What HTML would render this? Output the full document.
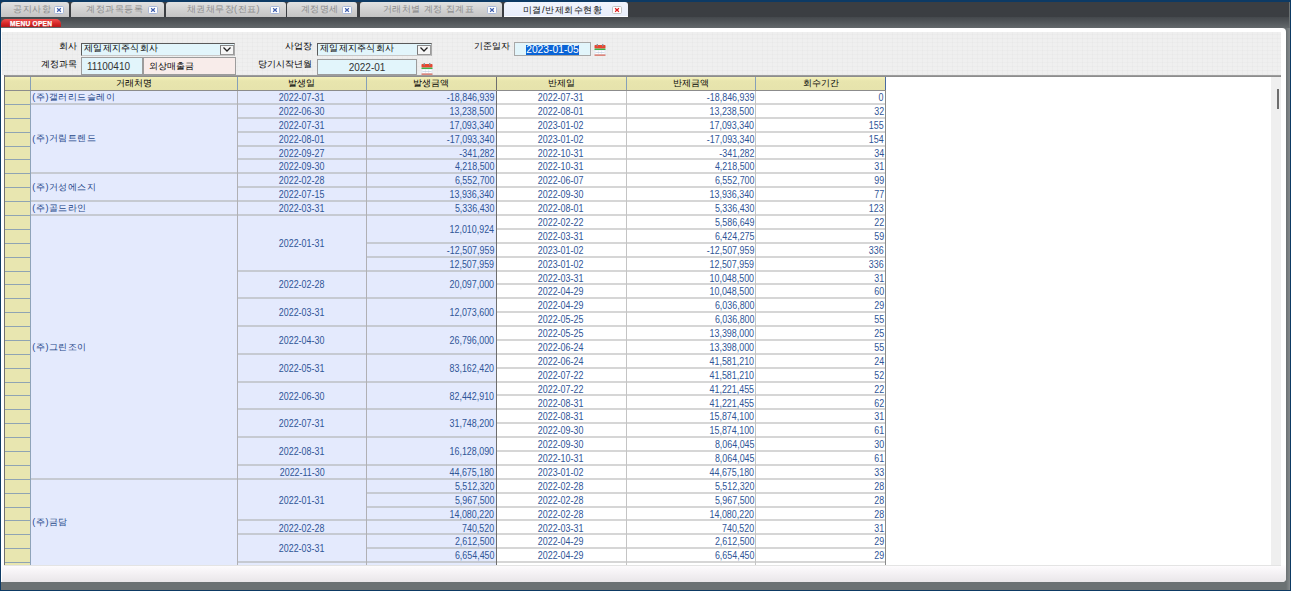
<!DOCTYPE html>
<html><head><meta charset="utf-8">
<style>
html,body{margin:0;padding:0;}
body{width:1291px;height:591px;overflow:hidden;position:relative;background:#6b7173;font-family:"Liberation Sans",sans-serif;}
.a{position:absolute;}
.t{position:absolute;display:flex;align-items:center;white-space:nowrap;color:#2f5597;font-size:10px;box-sizing:border-box;}
.t i{font-style:normal;display:inline-block;transform:scaleX(0.89);}
.c i{transform-origin:50% 50%;} .r i{transform-origin:100% 50%;}
.c,.r{padding-top:1.2px;}
.th{justify-content:center;color:#000;font-size:9px;padding-top:0.6px;}
.nm{color:#27488a;justify-content:flex-start;padding-left:2px;padding-top:0.5px;font-size:9px;letter-spacing:0.45px;}
.c{justify-content:center;}
.r{justify-content:flex-end;padding-right:1.5px;}
.pl,.pr{font-weight:normal;display:inline-block;width:3.8px;text-align:center;}
.hd{background:linear-gradient(#f4f1b9,#e8e5ae 30%,#e6e3ac);}
.tab{position:absolute;top:2px;height:14.5px;border-radius:3px 3px 0 0;background:linear-gradient(#e2e2e2,#cfcfcf 60%,#c4c4c4);}
.tab.act{background:linear-gradient(#f2f5fd,#e8eefb);border-bottom:1px solid #fff;height:14px;}
.tabt{position:absolute;top:2px;height:14px;line-height:14px;font-size:9.2px;letter-spacing:0.5px;color:#8c8c8c;white-space:nowrap;}
.tabt.act{color:#111;font-size:9.3px;letter-spacing:0.55px;top:2.6px;}
.cls{position:absolute;top:5.8px;width:10px;height:8px;}
.cls svg{display:block}
.lbl{position:absolute;font-size:9.2px;color:#000;white-space:nowrap;line-height:12px;}
.inp{position:absolute;box-sizing:border-box;background:#e2f5fb;font-size:9.2px;color:#000;white-space:nowrap;display:flex;align-items:center;}
</style></head><body>
<!-- frame -->
<div class="a" style="left:0;top:0;width:1291px;height:1.5px;background:#0d3a64"></div>
<div class="a" style="left:0;top:0;width:1.2px;height:591px;background:#0d3a64"></div>
<div class="a" style="left:1289.5px;top:0;width:1.5px;height:591px;background:#0d3a64"></div>
<div class="a" style="left:0;top:589.5px;width:1291px;height:1.5px;background:#0d3a64"></div>
<div class="a" style="left:1.2px;top:1.5px;width:1288.3px;height:15px;background:#3b3e42"></div>
<div class="a" style="left:1.2px;top:16.5px;width:1287.5px;height:11px;background:linear-gradient(#44484c,#63686b)"></div>
<div class="a" style="left:1286px;top:27.5px;width:3.5px;height:562px;background:linear-gradient(90deg,#6b7173,#868b8d)"></div>
<div class="tab" style="left:1px;width:67.5px"></div>
<div class="tabt" style="left:13px">공지사항</div>
<div class="cls" style="left:53.5px"><svg width="10" height="8" viewBox="0 0 10 8"><rect x="0.5" y="0.5" width="9" height="7" rx="1.2" fill="#fff" stroke="#a8b8d8"/><path d="M3.1 2.3 L6.9 5.7 M6.9 2.3 L3.1 5.7" stroke="#3f5fae" stroke-width="1.2"/></svg></div>
<div class="tab" style="left:70.5px;width:93.0px"></div>
<div class="tabt" style="left:86px">계정과목등록</div>
<div class="cls" style="left:148px"><svg width="10" height="8" viewBox="0 0 10 8"><rect x="0.5" y="0.5" width="9" height="7" rx="1.2" fill="#fff" stroke="#a8b8d8"/><path d="M3.1 2.3 L6.9 5.7 M6.9 2.3 L3.1 5.7" stroke="#3f5fae" stroke-width="1.2"/></svg></div>
<div class="tab" style="left:165.5px;width:120.0px"></div>
<div class="tabt" style="left:186.5px">채권채무장(전표)</div>
<div class="cls" style="left:269.5px"><svg width="10" height="8" viewBox="0 0 10 8"><rect x="0.5" y="0.5" width="9" height="7" rx="1.2" fill="#fff" stroke="#a8b8d8"/><path d="M3.1 2.3 L6.9 5.7 M6.9 2.3 L3.1 5.7" stroke="#3f5fae" stroke-width="1.2"/></svg></div>
<div class="tab" style="left:287px;width:69.5px"></div>
<div class="tabt" style="left:300.5px">계정명세</div>
<div class="cls" style="left:342px"><svg width="10" height="8" viewBox="0 0 10 8"><rect x="0.5" y="0.5" width="9" height="7" rx="1.2" fill="#fff" stroke="#a8b8d8"/><path d="M3.1 2.3 L6.9 5.7 M6.9 2.3 L3.1 5.7" stroke="#3f5fae" stroke-width="1.2"/></svg></div>
<div class="tab" style="left:359.5px;width:142.0px"></div>
<div class="tabt" style="left:382.5px">거래처별 계정 집계표</div>
<div class="cls" style="left:487px"><svg width="10" height="8" viewBox="0 0 10 8"><rect x="0.5" y="0.5" width="9" height="7" rx="1.2" fill="#fff" stroke="#a8b8d8"/><path d="M3.1 2.3 L6.9 5.7 M6.9 2.3 L3.1 5.7" stroke="#3f5fae" stroke-width="1.2"/></svg></div>
<div class="tab act" style="left:504px;width:124px"></div>
<div class="tabt act" style="left:522.8px">미결/반제회수현황</div>
<div class="cls" style="left:612px"><svg width="10" height="8" viewBox="0 0 10 8"><rect x="0.5" y="0.5" width="9" height="7" rx="1.2" fill="#fff" stroke="#c4c4c4"/><path d="M3.1 2.3 L6.9 5.7 M6.9 2.3 L3.1 5.7" stroke="#e01818" stroke-width="1.2"/></svg></div>
<!-- menu open -->
<div class="a" style="left:1.2px;top:19.3px;width:60px;height:8.2px;border-radius:5px 5px 0 0;background:linear-gradient(#f05050,#d42626 60%,#b81818)"></div>
<div class="a" style="left:10px;top:19.5px;height:8px;line-height:8px;font-size:6.6px;font-weight:bold;color:#fff;letter-spacing:0.25px;-webkit-text-stroke:0.25px #fff;white-space:nowrap">MENU OPEN</div>
<!-- panel -->
<div class="a" style="left:1.2px;top:27.5px;width:1284.8px;height:554.6px;background:#fff;border-radius:0 4px 4px 0"></div>
<div class="a" style="left:2px;top:31.5px;width:1279px;height:43px;background:repeating-linear-gradient(90deg,rgba(0,0,0,0.015) 0 1px,transparent 1px 5px),repeating-linear-gradient(0deg,rgba(0,0,0,0.015) 0 1px,transparent 1px 4px),#efefef"></div>
<div class="a" style="left:2px;top:565.2px;width:1284px;height:16.9px;background:linear-gradient(#fefdfe,#f6f3f6 40%,#e9e6e9);border-radius:0 0 4px 0"></div>
<!-- form -->
<div class="lbl" style="right:1214.3px;top:39.7px">회사</div>
<div class="inp" style="left:81px;top:43px;width:154px;height:12.5px;border-top:1.5px solid #5a5a5a;border-left:1.5px solid #5a5a5a;border-right:1px solid #a8a8a8;border-bottom:1px solid #c8c8c8;padding-left:2px;letter-spacing:0.3px;padding-bottom:1px">제일제지주식회사</div>
<div class="a" style="left:220px;top:44.5px;width:14px;height:10px;background:#f6f6f6;border:1px solid #9a9a9a;border-left-color:#7a7a7a;border-top-color:#8a8a8a;box-sizing:border-box"></div>
<svg class="a" style="left:222px;top:46px" width="10" height="7" viewBox="0 0 10 7"><path d="M1.5 1.5 L5 5 L8.5 1.5" fill="none" stroke="#222" stroke-width="1.3"/></svg>
<div class="lbl" style="right:1214.3px;top:58px">계정과목</div>
<div class="inp" style="left:81px;top:57px;width:62px;height:18px;border:1px solid #9c9c9c;padding-left:5px;font-size:10px;padding-top:1px;color:#333">11100410</div>
<div class="inp" style="left:143px;top:57px;width:93px;height:18px;border:1px solid #9c9c9c;background:#f8ecea;padding-left:5px">외상매출금</div>
<div class="lbl" style="right:979.1px;top:39.7px">사업장</div>
<div class="inp" style="left:317px;top:43px;width:115px;height:12.5px;border-top:1.5px solid #5a5a5a;border-left:1.5px solid #5a5a5a;border-right:1px solid #a8a8a8;border-bottom:1px solid #c8c8c8;padding-left:2px;letter-spacing:0.3px;padding-bottom:1px">제일제지주식회사</div>
<div class="a" style="left:417px;top:44.5px;width:14px;height:10px;background:#f6f6f6;border:1px solid #9a9a9a;border-left-color:#7a7a7a;border-top-color:#8a8a8a;box-sizing:border-box"></div>
<svg class="a" style="left:419px;top:46px" width="10" height="7" viewBox="0 0 10 7"><path d="M1.5 1.5 L5 5 L8.5 1.5" fill="none" stroke="#222" stroke-width="1.3"/></svg>
<div class="lbl" style="right:979.1px;top:58.2px">당기시작년월</div>
<div class="inp" style="left:317px;top:59px;width:100px;height:16px;border:1px solid #9c9c9c;justify-content:center;font-size:10px;color:#333">2022-01</div>
<div class="a" style="left:420.5px;top:62.5px"><svg style="display:block" width="12" height="12" viewBox="0 0 12 12"><rect x="0.5" y="1" width="11" height="10.5" fill="#e4ecf6"/><rect x="0.5" y="1" width="11" height="3.6" rx="0.8" fill="#e8452e"/><rect x="0.5" y="4.6" width="11" height="1.4" fill="#3fb24a"/><g fill="#fff"><rect x="1.5" y="6.6" width="2.4" height="3.4"/><rect x="4.8" y="6.6" width="2.4" height="3.4"/><rect x="8.1" y="6.6" width="2.4" height="3.4"/></g><g fill="#b8c8dc"><rect x="1.5" y="8.1" width="9" height="0.6"/></g><rect x="0.5" y="10.6" width="11" height="1" fill="#d4452e"/><rect x="2.6" y="0" width="1.3" height="2.4" fill="#8a8f94"/><rect x="8.1" y="0" width="1.3" height="2.4" fill="#8a8f94"/></svg></div>
<div class="lbl" style="right:781.4px;top:39.7px">기준일자</div>
<div class="inp" style="left:514px;top:42px;width:77px;height:13.5px;border:1px solid #a8a8a8;justify-content:center"><span style="background:#0a64d6;color:#fff;padding:0 0.5px;line-height:10px;font-size:10.3px;margin-top:1.5px">2023-01-05</span></div>
<div class="a" style="left:594px;top:43.5px"><svg style="display:block" width="12" height="12" viewBox="0 0 12 12"><rect x="0.5" y="1" width="11" height="10.5" fill="#e4ecf6"/><rect x="0.5" y="1" width="11" height="3.6" rx="0.8" fill="#e8452e"/><rect x="0.5" y="4.6" width="11" height="1.4" fill="#3fb24a"/><g fill="#fff"><rect x="1.5" y="6.6" width="2.4" height="3.4"/><rect x="4.8" y="6.6" width="2.4" height="3.4"/><rect x="8.1" y="6.6" width="2.4" height="3.4"/></g><g fill="#b8c8dc"><rect x="1.5" y="8.1" width="9" height="0.6"/></g><rect x="0.5" y="10.6" width="11" height="1" fill="#d4452e"/><rect x="2.6" y="0" width="1.3" height="2.4" fill="#8a8f94"/><rect x="8.1" y="0" width="1.3" height="2.4" fill="#8a8f94"/></svg></div>
<!-- table -->
<div class="a" style="left:4.00px;top:90.00px;width:26.00px;height:475.20px;background:#e8e6b0"></div>
<div class="a" style="left:30.00px;top:90.00px;width:466.00px;height:475.20px;background:#e4eafd"></div>
<div class="a hd" style="left:4.00px;top:77.00px;width:881.50px;height:13.00px;"></div>
<div class="a" style="left:4.00px;top:104.00px;width:26.00px;height:1.00px;background:#8fa4b3"></div>
<div class="a" style="left:30.00px;top:103.00px;width:207.00px;height:2.00px;background:#c6cad2"></div>
<div class="a" style="left:237.00px;top:103.00px;width:129.50px;height:2.00px;background:#c6cad2"></div>
<div class="a" style="left:366.50px;top:103.00px;width:129.50px;height:2.00px;background:#c6cad2"></div>
<div class="a" style="left:496.00px;top:103.00px;width:389.50px;height:2.00px;background:#d6d6d6"></div>
<div class="a" style="left:4.00px;top:118.00px;width:26.00px;height:1.00px;background:#8fa4b3"></div>
<div class="a" style="left:237.00px;top:117.00px;width:129.50px;height:2.00px;background:#c6cad2"></div>
<div class="a" style="left:366.50px;top:117.00px;width:129.50px;height:2.00px;background:#c6cad2"></div>
<div class="a" style="left:496.00px;top:117.00px;width:389.50px;height:2.00px;background:#d6d6d6"></div>
<div class="a" style="left:4.00px;top:132.00px;width:26.00px;height:1.00px;background:#8fa4b3"></div>
<div class="a" style="left:237.00px;top:131.00px;width:129.50px;height:2.00px;background:#c6cad2"></div>
<div class="a" style="left:366.50px;top:131.00px;width:129.50px;height:2.00px;background:#c6cad2"></div>
<div class="a" style="left:496.00px;top:131.00px;width:389.50px;height:2.00px;background:#d6d6d6"></div>
<div class="a" style="left:4.00px;top:146.00px;width:26.00px;height:1.00px;background:#8fa4b3"></div>
<div class="a" style="left:237.00px;top:145.00px;width:129.50px;height:2.00px;background:#c6cad2"></div>
<div class="a" style="left:366.50px;top:145.00px;width:129.50px;height:2.00px;background:#c6cad2"></div>
<div class="a" style="left:496.00px;top:145.00px;width:389.50px;height:2.00px;background:#d6d6d6"></div>
<div class="a" style="left:4.00px;top:159.00px;width:26.00px;height:1.00px;background:#8fa4b3"></div>
<div class="a" style="left:237.00px;top:158.00px;width:129.50px;height:2.00px;background:#c6cad2"></div>
<div class="a" style="left:366.50px;top:158.00px;width:129.50px;height:2.00px;background:#c6cad2"></div>
<div class="a" style="left:496.00px;top:158.00px;width:389.50px;height:2.00px;background:#d6d6d6"></div>
<div class="a" style="left:4.00px;top:173.00px;width:26.00px;height:1.00px;background:#8fa4b3"></div>
<div class="a" style="left:30.00px;top:172.00px;width:207.00px;height:2.00px;background:#c6cad2"></div>
<div class="a" style="left:237.00px;top:172.00px;width:129.50px;height:2.00px;background:#c6cad2"></div>
<div class="a" style="left:366.50px;top:172.00px;width:129.50px;height:2.00px;background:#c6cad2"></div>
<div class="a" style="left:496.00px;top:172.00px;width:389.50px;height:2.00px;background:#d6d6d6"></div>
<div class="a" style="left:4.00px;top:187.00px;width:26.00px;height:1.00px;background:#8fa4b3"></div>
<div class="a" style="left:237.00px;top:186.00px;width:129.50px;height:2.00px;background:#c6cad2"></div>
<div class="a" style="left:366.50px;top:186.00px;width:129.50px;height:2.00px;background:#c6cad2"></div>
<div class="a" style="left:496.00px;top:186.00px;width:389.50px;height:2.00px;background:#d6d6d6"></div>
<div class="a" style="left:4.00px;top:201.00px;width:26.00px;height:1.00px;background:#8fa4b3"></div>
<div class="a" style="left:30.00px;top:200.00px;width:207.00px;height:2.00px;background:#c6cad2"></div>
<div class="a" style="left:237.00px;top:200.00px;width:129.50px;height:2.00px;background:#c6cad2"></div>
<div class="a" style="left:366.50px;top:200.00px;width:129.50px;height:2.00px;background:#c6cad2"></div>
<div class="a" style="left:496.00px;top:200.00px;width:389.50px;height:2.00px;background:#d6d6d6"></div>
<div class="a" style="left:4.00px;top:215.00px;width:26.00px;height:1.00px;background:#8fa4b3"></div>
<div class="a" style="left:30.00px;top:214.00px;width:207.00px;height:2.00px;background:#c6cad2"></div>
<div class="a" style="left:237.00px;top:214.00px;width:129.50px;height:2.00px;background:#c6cad2"></div>
<div class="a" style="left:366.50px;top:214.00px;width:129.50px;height:2.00px;background:#c6cad2"></div>
<div class="a" style="left:496.00px;top:214.00px;width:389.50px;height:2.00px;background:#d6d6d6"></div>
<div class="a" style="left:4.00px;top:229.00px;width:26.00px;height:1.00px;background:#8fa4b3"></div>
<div class="a" style="left:496.00px;top:228.00px;width:389.50px;height:2.00px;background:#d6d6d6"></div>
<div class="a" style="left:4.00px;top:243.00px;width:26.00px;height:1.00px;background:#8fa4b3"></div>
<div class="a" style="left:366.50px;top:242.00px;width:129.50px;height:2.00px;background:#c6cad2"></div>
<div class="a" style="left:496.00px;top:242.00px;width:389.50px;height:2.00px;background:#d6d6d6"></div>
<div class="a" style="left:4.00px;top:257.00px;width:26.00px;height:1.00px;background:#8fa4b3"></div>
<div class="a" style="left:366.50px;top:256.00px;width:129.50px;height:2.00px;background:#c6cad2"></div>
<div class="a" style="left:496.00px;top:256.00px;width:389.50px;height:2.00px;background:#d6d6d6"></div>
<div class="a" style="left:4.00px;top:271.00px;width:26.00px;height:1.00px;background:#8fa4b3"></div>
<div class="a" style="left:237.00px;top:270.00px;width:129.50px;height:2.00px;background:#c6cad2"></div>
<div class="a" style="left:366.50px;top:270.00px;width:129.50px;height:2.00px;background:#c6cad2"></div>
<div class="a" style="left:496.00px;top:270.00px;width:389.50px;height:2.00px;background:#d6d6d6"></div>
<div class="a" style="left:4.00px;top:284.00px;width:26.00px;height:1.00px;background:#8fa4b3"></div>
<div class="a" style="left:496.00px;top:283.00px;width:389.50px;height:2.00px;background:#d6d6d6"></div>
<div class="a" style="left:4.00px;top:298.00px;width:26.00px;height:1.00px;background:#8fa4b3"></div>
<div class="a" style="left:237.00px;top:297.00px;width:129.50px;height:2.00px;background:#c6cad2"></div>
<div class="a" style="left:366.50px;top:297.00px;width:129.50px;height:2.00px;background:#c6cad2"></div>
<div class="a" style="left:496.00px;top:297.00px;width:389.50px;height:2.00px;background:#d6d6d6"></div>
<div class="a" style="left:4.00px;top:312.00px;width:26.00px;height:1.00px;background:#8fa4b3"></div>
<div class="a" style="left:496.00px;top:311.00px;width:389.50px;height:2.00px;background:#d6d6d6"></div>
<div class="a" style="left:4.00px;top:326.00px;width:26.00px;height:1.00px;background:#8fa4b3"></div>
<div class="a" style="left:237.00px;top:325.00px;width:129.50px;height:2.00px;background:#c6cad2"></div>
<div class="a" style="left:366.50px;top:325.00px;width:129.50px;height:2.00px;background:#c6cad2"></div>
<div class="a" style="left:496.00px;top:325.00px;width:389.50px;height:2.00px;background:#d6d6d6"></div>
<div class="a" style="left:4.00px;top:340.00px;width:26.00px;height:1.00px;background:#8fa4b3"></div>
<div class="a" style="left:496.00px;top:339.00px;width:389.50px;height:2.00px;background:#d6d6d6"></div>
<div class="a" style="left:4.00px;top:354.00px;width:26.00px;height:1.00px;background:#8fa4b3"></div>
<div class="a" style="left:237.00px;top:353.00px;width:129.50px;height:2.00px;background:#c6cad2"></div>
<div class="a" style="left:366.50px;top:353.00px;width:129.50px;height:2.00px;background:#c6cad2"></div>
<div class="a" style="left:496.00px;top:353.00px;width:389.50px;height:2.00px;background:#d6d6d6"></div>
<div class="a" style="left:4.00px;top:368.00px;width:26.00px;height:1.00px;background:#8fa4b3"></div>
<div class="a" style="left:496.00px;top:367.00px;width:389.50px;height:2.00px;background:#d6d6d6"></div>
<div class="a" style="left:4.00px;top:382.00px;width:26.00px;height:1.00px;background:#8fa4b3"></div>
<div class="a" style="left:237.00px;top:381.00px;width:129.50px;height:2.00px;background:#c6cad2"></div>
<div class="a" style="left:366.50px;top:381.00px;width:129.50px;height:2.00px;background:#c6cad2"></div>
<div class="a" style="left:496.00px;top:381.00px;width:389.50px;height:2.00px;background:#d6d6d6"></div>
<div class="a" style="left:4.00px;top:395.00px;width:26.00px;height:1.00px;background:#8fa4b3"></div>
<div class="a" style="left:496.00px;top:394.00px;width:389.50px;height:2.00px;background:#d6d6d6"></div>
<div class="a" style="left:4.00px;top:409.00px;width:26.00px;height:1.00px;background:#8fa4b3"></div>
<div class="a" style="left:237.00px;top:408.00px;width:129.50px;height:2.00px;background:#c6cad2"></div>
<div class="a" style="left:366.50px;top:408.00px;width:129.50px;height:2.00px;background:#c6cad2"></div>
<div class="a" style="left:496.00px;top:408.00px;width:389.50px;height:2.00px;background:#d6d6d6"></div>
<div class="a" style="left:4.00px;top:423.00px;width:26.00px;height:1.00px;background:#8fa4b3"></div>
<div class="a" style="left:496.00px;top:422.00px;width:389.50px;height:2.00px;background:#d6d6d6"></div>
<div class="a" style="left:4.00px;top:437.00px;width:26.00px;height:1.00px;background:#8fa4b3"></div>
<div class="a" style="left:237.00px;top:436.00px;width:129.50px;height:2.00px;background:#c6cad2"></div>
<div class="a" style="left:366.50px;top:436.00px;width:129.50px;height:2.00px;background:#c6cad2"></div>
<div class="a" style="left:496.00px;top:436.00px;width:389.50px;height:2.00px;background:#d6d6d6"></div>
<div class="a" style="left:4.00px;top:451.00px;width:26.00px;height:1.00px;background:#8fa4b3"></div>
<div class="a" style="left:496.00px;top:450.00px;width:389.50px;height:2.00px;background:#d6d6d6"></div>
<div class="a" style="left:4.00px;top:465.00px;width:26.00px;height:1.00px;background:#8fa4b3"></div>
<div class="a" style="left:237.00px;top:464.00px;width:129.50px;height:2.00px;background:#c6cad2"></div>
<div class="a" style="left:366.50px;top:464.00px;width:129.50px;height:2.00px;background:#c6cad2"></div>
<div class="a" style="left:496.00px;top:464.00px;width:389.50px;height:2.00px;background:#d6d6d6"></div>
<div class="a" style="left:4.00px;top:479.00px;width:26.00px;height:1.00px;background:#8fa4b3"></div>
<div class="a" style="left:30.00px;top:478.00px;width:207.00px;height:2.00px;background:#c6cad2"></div>
<div class="a" style="left:237.00px;top:478.00px;width:129.50px;height:2.00px;background:#c6cad2"></div>
<div class="a" style="left:366.50px;top:478.00px;width:129.50px;height:2.00px;background:#c6cad2"></div>
<div class="a" style="left:496.00px;top:478.00px;width:389.50px;height:2.00px;background:#d6d6d6"></div>
<div class="a" style="left:4.00px;top:493.00px;width:26.00px;height:1.00px;background:#8fa4b3"></div>
<div class="a" style="left:366.50px;top:492.00px;width:129.50px;height:2.00px;background:#c6cad2"></div>
<div class="a" style="left:496.00px;top:492.00px;width:389.50px;height:2.00px;background:#d6d6d6"></div>
<div class="a" style="left:4.00px;top:507.00px;width:26.00px;height:1.00px;background:#8fa4b3"></div>
<div class="a" style="left:366.50px;top:506.00px;width:129.50px;height:2.00px;background:#c6cad2"></div>
<div class="a" style="left:496.00px;top:506.00px;width:389.50px;height:2.00px;background:#d6d6d6"></div>
<div class="a" style="left:4.00px;top:520.00px;width:26.00px;height:1.00px;background:#8fa4b3"></div>
<div class="a" style="left:237.00px;top:519.00px;width:129.50px;height:2.00px;background:#c6cad2"></div>
<div class="a" style="left:366.50px;top:519.00px;width:129.50px;height:2.00px;background:#c6cad2"></div>
<div class="a" style="left:496.00px;top:519.00px;width:389.50px;height:2.00px;background:#d6d6d6"></div>
<div class="a" style="left:4.00px;top:534.00px;width:26.00px;height:1.00px;background:#8fa4b3"></div>
<div class="a" style="left:237.00px;top:533.00px;width:129.50px;height:2.00px;background:#c6cad2"></div>
<div class="a" style="left:366.50px;top:533.00px;width:129.50px;height:2.00px;background:#c6cad2"></div>
<div class="a" style="left:496.00px;top:533.00px;width:389.50px;height:2.00px;background:#d6d6d6"></div>
<div class="a" style="left:4.00px;top:548.00px;width:26.00px;height:1.00px;background:#8fa4b3"></div>
<div class="a" style="left:366.50px;top:547.00px;width:129.50px;height:2.00px;background:#c6cad2"></div>
<div class="a" style="left:496.00px;top:547.00px;width:389.50px;height:2.00px;background:#d6d6d6"></div>
<div class="a" style="left:4.00px;top:562.00px;width:26.00px;height:1.00px;background:#8fa4b3"></div>
<div class="a" style="left:237.00px;top:561.00px;width:129.50px;height:2.00px;background:#c6cad2"></div>
<div class="a" style="left:366.50px;top:561.00px;width:129.50px;height:2.00px;background:#c6cad2"></div>
<div class="a" style="left:496.00px;top:561.00px;width:389.50px;height:2.00px;background:#d6d6d6"></div>
<div class="a" style="left:29.50px;top:90.00px;width:1.00px;height:475.20px;background:#8ea3b9"></div>
<div class="a" style="left:236.50px;top:90.00px;width:1.00px;height:475.20px;background:#b0b0b4"></div>
<div class="a" style="left:366.00px;top:90.00px;width:1.00px;height:475.20px;background:#b0b0b4"></div>
<div class="a" style="left:495.50px;top:77.00px;width:1.00px;height:488.20px;background:#6e6e6e"></div>
<div class="a" style="left:625.50px;top:90.00px;width:1.00px;height:475.20px;background:#c4c4c4"></div>
<div class="a" style="left:755.00px;top:90.00px;width:1.00px;height:475.20px;background:#c4c4c4"></div>
<div class="a" style="left:885.00px;top:90.00px;width:1.00px;height:475.20px;background:#8a8a8a"></div>
<div class="a" style="left:29.50px;top:77.00px;width:1.00px;height:13.00px;background:#86a0b8"></div>
<div class="a" style="left:236.50px;top:77.00px;width:1.00px;height:13.00px;background:#86a0b8"></div>
<div class="a" style="left:366.00px;top:77.00px;width:1.00px;height:13.00px;background:#86a0b8"></div>
<div class="a" style="left:625.50px;top:77.00px;width:1.00px;height:13.00px;background:#86a0b8"></div>
<div class="a" style="left:755.00px;top:77.00px;width:1.00px;height:13.00px;background:#86a0b8"></div>
<div class="a" style="left:885.00px;top:77.00px;width:1.00px;height:13.00px;background:#4a6aa0"></div>
<div class="a" style="left:3.50px;top:75.00px;width:1277.00px;height:2.00px;background:linear-gradient(#a4a4a4,#858585)"></div>
<div class="a" style="left:4.00px;top:89.50px;width:881.50px;height:1.00px;background:#8c8c8c"></div>
<div class="a" style="left:3.50px;top:75.00px;width:1.00px;height:490.20px;background:#707070"></div>
<div class="t th" style="left:30.00px;top:76.00px;width:207.00px;height:14.00px;">거래처명</div>
<div class="t th" style="left:237.00px;top:76.00px;width:129.50px;height:14.00px;">발생일</div>
<div class="t th" style="left:366.50px;top:76.00px;width:129.50px;height:14.00px;">발생금액</div>
<div class="t th" style="left:496.00px;top:76.00px;width:130.00px;height:14.00px;">반제일</div>
<div class="t th" style="left:626.00px;top:76.00px;width:129.50px;height:14.00px;">반제금액</div>
<div class="t th" style="left:755.50px;top:76.00px;width:130.00px;height:14.00px;">회수기간</div>
<div class="t nm" style="left:30.00px;top:90.00px;width:207.00px;height:13.89px;"><b class="pl">(</b>주<b class="pr">)</b>갤러리드슬레이</div>
<div class="t nm" style="left:30.00px;top:103.89px;width:207.00px;height:69.43px;"><b class="pl">(</b>주<b class="pr">)</b>거림트렌드</div>
<div class="t nm" style="left:30.00px;top:173.32px;width:207.00px;height:27.77px;"><b class="pl">(</b>주<b class="pr">)</b>거성에스지</div>
<div class="t nm" style="left:30.00px;top:201.09px;width:207.00px;height:13.89px;"><b class="pl">(</b>주<b class="pr">)</b>골드라인</div>
<div class="t nm" style="left:30.00px;top:214.97px;width:207.00px;height:263.83px;"><b class="pl">(</b>주<b class="pr">)</b>그린조이</div>
<div class="t nm" style="left:30.00px;top:478.81px;width:207.00px;height:86.39px;"><b class="pl">(</b>주<b class="pr">)</b>금담</div>
<div class="t c" style="left:237.00px;top:90.00px;width:129.50px;height:13.89px;"><i>2022-07-31</i></div>
<div class="t c" style="left:237.00px;top:103.89px;width:129.50px;height:13.89px;"><i>2022-06-30</i></div>
<div class="t c" style="left:237.00px;top:117.77px;width:129.50px;height:13.89px;"><i>2022-07-31</i></div>
<div class="t c" style="left:237.00px;top:131.66px;width:129.50px;height:13.89px;"><i>2022-08-01</i></div>
<div class="t c" style="left:237.00px;top:145.54px;width:129.50px;height:13.89px;"><i>2022-09-27</i></div>
<div class="t c" style="left:237.00px;top:159.43px;width:129.50px;height:13.89px;"><i>2022-09-30</i></div>
<div class="t c" style="left:237.00px;top:173.32px;width:129.50px;height:13.89px;"><i>2022-02-28</i></div>
<div class="t c" style="left:237.00px;top:187.20px;width:129.50px;height:13.89px;"><i>2022-07-15</i></div>
<div class="t c" style="left:237.00px;top:201.09px;width:129.50px;height:13.89px;"><i>2022-03-31</i></div>
<div class="t c" style="left:237.00px;top:214.97px;width:129.50px;height:55.54px;"><i>2022-01-31</i></div>
<div class="t c" style="left:237.00px;top:270.52px;width:129.50px;height:27.77px;"><i>2022-02-28</i></div>
<div class="t c" style="left:237.00px;top:298.29px;width:129.50px;height:27.77px;"><i>2022-03-31</i></div>
<div class="t c" style="left:237.00px;top:326.06px;width:129.50px;height:27.77px;"><i>2022-04-30</i></div>
<div class="t c" style="left:237.00px;top:353.83px;width:129.50px;height:27.77px;"><i>2022-05-31</i></div>
<div class="t c" style="left:237.00px;top:381.61px;width:129.50px;height:27.77px;"><i>2022-06-30</i></div>
<div class="t c" style="left:237.00px;top:409.38px;width:129.50px;height:27.77px;"><i>2022-07-31</i></div>
<div class="t c" style="left:237.00px;top:437.15px;width:129.50px;height:27.77px;"><i>2022-08-31</i></div>
<div class="t c" style="left:237.00px;top:464.92px;width:129.50px;height:13.89px;"><i>2022-11-30</i></div>
<div class="t c" style="left:237.00px;top:478.81px;width:129.50px;height:41.66px;"><i>2022-01-31</i></div>
<div class="t c" style="left:237.00px;top:520.47px;width:129.50px;height:13.89px;"><i>2022-02-28</i></div>
<div class="t c" style="left:237.00px;top:534.35px;width:129.50px;height:27.77px;"><i>2022-03-31</i></div>
<div class="t r" style="left:366.50px;top:90.00px;width:129.50px;height:13.89px;"><i>-18,846,939</i></div>
<div class="t r" style="left:366.50px;top:103.89px;width:129.50px;height:13.89px;"><i>13,238,500</i></div>
<div class="t r" style="left:366.50px;top:117.77px;width:129.50px;height:13.89px;"><i>17,093,340</i></div>
<div class="t r" style="left:366.50px;top:131.66px;width:129.50px;height:13.89px;"><i>-17,093,340</i></div>
<div class="t r" style="left:366.50px;top:145.54px;width:129.50px;height:13.89px;"><i>-341,282</i></div>
<div class="t r" style="left:366.50px;top:159.43px;width:129.50px;height:13.89px;"><i>4,218,500</i></div>
<div class="t r" style="left:366.50px;top:173.32px;width:129.50px;height:13.89px;"><i>6,552,700</i></div>
<div class="t r" style="left:366.50px;top:187.20px;width:129.50px;height:13.89px;"><i>13,936,340</i></div>
<div class="t r" style="left:366.50px;top:201.09px;width:129.50px;height:13.89px;"><i>5,336,430</i></div>
<div class="t r" style="left:366.50px;top:214.97px;width:129.50px;height:27.77px;"><i>12,010,924</i></div>
<div class="t r" style="left:366.50px;top:242.75px;width:129.50px;height:13.89px;"><i>-12,507,959</i></div>
<div class="t r" style="left:366.50px;top:256.63px;width:129.50px;height:13.89px;"><i>12,507,959</i></div>
<div class="t r" style="left:366.50px;top:270.52px;width:129.50px;height:27.77px;"><i>20,097,000</i></div>
<div class="t r" style="left:366.50px;top:298.29px;width:129.50px;height:27.77px;"><i>12,073,600</i></div>
<div class="t r" style="left:366.50px;top:326.06px;width:129.50px;height:27.77px;"><i>26,796,000</i></div>
<div class="t r" style="left:366.50px;top:353.83px;width:129.50px;height:27.77px;"><i>83,162,420</i></div>
<div class="t r" style="left:366.50px;top:381.61px;width:129.50px;height:27.77px;"><i>82,442,910</i></div>
<div class="t r" style="left:366.50px;top:409.38px;width:129.50px;height:27.77px;"><i>31,748,200</i></div>
<div class="t r" style="left:366.50px;top:437.15px;width:129.50px;height:27.77px;"><i>16,128,090</i></div>
<div class="t r" style="left:366.50px;top:464.92px;width:129.50px;height:13.89px;"><i>44,675,180</i></div>
<div class="t r" style="left:366.50px;top:478.81px;width:129.50px;height:13.89px;"><i>5,512,320</i></div>
<div class="t r" style="left:366.50px;top:492.69px;width:129.50px;height:13.89px;"><i>5,967,500</i></div>
<div class="t r" style="left:366.50px;top:506.58px;width:129.50px;height:13.89px;"><i>14,080,220</i></div>
<div class="t r" style="left:366.50px;top:520.47px;width:129.50px;height:13.89px;"><i>740,520</i></div>
<div class="t r" style="left:366.50px;top:534.35px;width:129.50px;height:13.89px;"><i>2,612,500</i></div>
<div class="t r" style="left:366.50px;top:548.24px;width:129.50px;height:13.89px;"><i>6,654,450</i></div>
<div class="t c" style="left:496.00px;top:90.00px;width:130.00px;height:13.89px;"><i>2022-07-31</i></div>
<div class="t r" style="left:626.00px;top:90.00px;width:129.50px;height:13.89px;"><i>-18,846,939</i></div>
<div class="t r" style="left:755.50px;top:90.00px;width:130.00px;height:13.89px;"><i>0</i></div>
<div class="t c" style="left:496.00px;top:103.89px;width:130.00px;height:13.89px;"><i>2022-08-01</i></div>
<div class="t r" style="left:626.00px;top:103.89px;width:129.50px;height:13.89px;"><i>13,238,500</i></div>
<div class="t r" style="left:755.50px;top:103.89px;width:130.00px;height:13.89px;"><i>32</i></div>
<div class="t c" style="left:496.00px;top:117.77px;width:130.00px;height:13.89px;"><i>2023-01-02</i></div>
<div class="t r" style="left:626.00px;top:117.77px;width:129.50px;height:13.89px;"><i>17,093,340</i></div>
<div class="t r" style="left:755.50px;top:117.77px;width:130.00px;height:13.89px;"><i>155</i></div>
<div class="t c" style="left:496.00px;top:131.66px;width:130.00px;height:13.89px;"><i>2023-01-02</i></div>
<div class="t r" style="left:626.00px;top:131.66px;width:129.50px;height:13.89px;"><i>-17,093,340</i></div>
<div class="t r" style="left:755.50px;top:131.66px;width:130.00px;height:13.89px;"><i>154</i></div>
<div class="t c" style="left:496.00px;top:145.54px;width:130.00px;height:13.89px;"><i>2022-10-31</i></div>
<div class="t r" style="left:626.00px;top:145.54px;width:129.50px;height:13.89px;"><i>-341,282</i></div>
<div class="t r" style="left:755.50px;top:145.54px;width:130.00px;height:13.89px;"><i>34</i></div>
<div class="t c" style="left:496.00px;top:159.43px;width:130.00px;height:13.89px;"><i>2022-10-31</i></div>
<div class="t r" style="left:626.00px;top:159.43px;width:129.50px;height:13.89px;"><i>4,218,500</i></div>
<div class="t r" style="left:755.50px;top:159.43px;width:130.00px;height:13.89px;"><i>31</i></div>
<div class="t c" style="left:496.00px;top:173.32px;width:130.00px;height:13.89px;"><i>2022-06-07</i></div>
<div class="t r" style="left:626.00px;top:173.32px;width:129.50px;height:13.89px;"><i>6,552,700</i></div>
<div class="t r" style="left:755.50px;top:173.32px;width:130.00px;height:13.89px;"><i>99</i></div>
<div class="t c" style="left:496.00px;top:187.20px;width:130.00px;height:13.89px;"><i>2022-09-30</i></div>
<div class="t r" style="left:626.00px;top:187.20px;width:129.50px;height:13.89px;"><i>13,936,340</i></div>
<div class="t r" style="left:755.50px;top:187.20px;width:130.00px;height:13.89px;"><i>77</i></div>
<div class="t c" style="left:496.00px;top:201.09px;width:130.00px;height:13.89px;"><i>2022-08-01</i></div>
<div class="t r" style="left:626.00px;top:201.09px;width:129.50px;height:13.89px;"><i>5,336,430</i></div>
<div class="t r" style="left:755.50px;top:201.09px;width:130.00px;height:13.89px;"><i>123</i></div>
<div class="t c" style="left:496.00px;top:214.97px;width:130.00px;height:13.89px;"><i>2022-02-22</i></div>
<div class="t r" style="left:626.00px;top:214.97px;width:129.50px;height:13.89px;"><i>5,586,649</i></div>
<div class="t r" style="left:755.50px;top:214.97px;width:130.00px;height:13.89px;"><i>22</i></div>
<div class="t c" style="left:496.00px;top:228.86px;width:130.00px;height:13.89px;"><i>2022-03-31</i></div>
<div class="t r" style="left:626.00px;top:228.86px;width:129.50px;height:13.89px;"><i>6,424,275</i></div>
<div class="t r" style="left:755.50px;top:228.86px;width:130.00px;height:13.89px;"><i>59</i></div>
<div class="t c" style="left:496.00px;top:242.75px;width:130.00px;height:13.89px;"><i>2023-01-02</i></div>
<div class="t r" style="left:626.00px;top:242.75px;width:129.50px;height:13.89px;"><i>-12,507,959</i></div>
<div class="t r" style="left:755.50px;top:242.75px;width:130.00px;height:13.89px;"><i>336</i></div>
<div class="t c" style="left:496.00px;top:256.63px;width:130.00px;height:13.89px;"><i>2023-01-02</i></div>
<div class="t r" style="left:626.00px;top:256.63px;width:129.50px;height:13.89px;"><i>12,507,959</i></div>
<div class="t r" style="left:755.50px;top:256.63px;width:130.00px;height:13.89px;"><i>336</i></div>
<div class="t c" style="left:496.00px;top:270.52px;width:130.00px;height:13.89px;"><i>2022-03-31</i></div>
<div class="t r" style="left:626.00px;top:270.52px;width:129.50px;height:13.89px;"><i>10,048,500</i></div>
<div class="t r" style="left:755.50px;top:270.52px;width:130.00px;height:13.89px;"><i>31</i></div>
<div class="t c" style="left:496.00px;top:284.40px;width:130.00px;height:13.89px;"><i>2022-04-29</i></div>
<div class="t r" style="left:626.00px;top:284.40px;width:129.50px;height:13.89px;"><i>10,048,500</i></div>
<div class="t r" style="left:755.50px;top:284.40px;width:130.00px;height:13.89px;"><i>60</i></div>
<div class="t c" style="left:496.00px;top:298.29px;width:130.00px;height:13.89px;"><i>2022-04-29</i></div>
<div class="t r" style="left:626.00px;top:298.29px;width:129.50px;height:13.89px;"><i>6,036,800</i></div>
<div class="t r" style="left:755.50px;top:298.29px;width:130.00px;height:13.89px;"><i>29</i></div>
<div class="t c" style="left:496.00px;top:312.18px;width:130.00px;height:13.89px;"><i>2022-05-25</i></div>
<div class="t r" style="left:626.00px;top:312.18px;width:129.50px;height:13.89px;"><i>6,036,800</i></div>
<div class="t r" style="left:755.50px;top:312.18px;width:130.00px;height:13.89px;"><i>55</i></div>
<div class="t c" style="left:496.00px;top:326.06px;width:130.00px;height:13.89px;"><i>2022-05-25</i></div>
<div class="t r" style="left:626.00px;top:326.06px;width:129.50px;height:13.89px;"><i>13,398,000</i></div>
<div class="t r" style="left:755.50px;top:326.06px;width:130.00px;height:13.89px;"><i>25</i></div>
<div class="t c" style="left:496.00px;top:339.95px;width:130.00px;height:13.89px;"><i>2022-06-24</i></div>
<div class="t r" style="left:626.00px;top:339.95px;width:129.50px;height:13.89px;"><i>13,398,000</i></div>
<div class="t r" style="left:755.50px;top:339.95px;width:130.00px;height:13.89px;"><i>55</i></div>
<div class="t c" style="left:496.00px;top:353.83px;width:130.00px;height:13.89px;"><i>2022-06-24</i></div>
<div class="t r" style="left:626.00px;top:353.83px;width:129.50px;height:13.89px;"><i>41,581,210</i></div>
<div class="t r" style="left:755.50px;top:353.83px;width:130.00px;height:13.89px;"><i>24</i></div>
<div class="t c" style="left:496.00px;top:367.72px;width:130.00px;height:13.89px;"><i>2022-07-22</i></div>
<div class="t r" style="left:626.00px;top:367.72px;width:129.50px;height:13.89px;"><i>41,581,210</i></div>
<div class="t r" style="left:755.50px;top:367.72px;width:130.00px;height:13.89px;"><i>52</i></div>
<div class="t c" style="left:496.00px;top:381.61px;width:130.00px;height:13.89px;"><i>2022-07-22</i></div>
<div class="t r" style="left:626.00px;top:381.61px;width:129.50px;height:13.89px;"><i>41,221,455</i></div>
<div class="t r" style="left:755.50px;top:381.61px;width:130.00px;height:13.89px;"><i>22</i></div>
<div class="t c" style="left:496.00px;top:395.49px;width:130.00px;height:13.89px;"><i>2022-08-31</i></div>
<div class="t r" style="left:626.00px;top:395.49px;width:129.50px;height:13.89px;"><i>41,221,455</i></div>
<div class="t r" style="left:755.50px;top:395.49px;width:130.00px;height:13.89px;"><i>62</i></div>
<div class="t c" style="left:496.00px;top:409.38px;width:130.00px;height:13.89px;"><i>2022-08-31</i></div>
<div class="t r" style="left:626.00px;top:409.38px;width:129.50px;height:13.89px;"><i>15,874,100</i></div>
<div class="t r" style="left:755.50px;top:409.38px;width:130.00px;height:13.89px;"><i>31</i></div>
<div class="t c" style="left:496.00px;top:423.26px;width:130.00px;height:13.89px;"><i>2022-09-30</i></div>
<div class="t r" style="left:626.00px;top:423.26px;width:129.50px;height:13.89px;"><i>15,874,100</i></div>
<div class="t r" style="left:755.50px;top:423.26px;width:130.00px;height:13.89px;"><i>61</i></div>
<div class="t c" style="left:496.00px;top:437.15px;width:130.00px;height:13.89px;"><i>2022-09-30</i></div>
<div class="t r" style="left:626.00px;top:437.15px;width:129.50px;height:13.89px;"><i>8,064,045</i></div>
<div class="t r" style="left:755.50px;top:437.15px;width:130.00px;height:13.89px;"><i>30</i></div>
<div class="t c" style="left:496.00px;top:451.04px;width:130.00px;height:13.89px;"><i>2022-10-31</i></div>
<div class="t r" style="left:626.00px;top:451.04px;width:129.50px;height:13.89px;"><i>8,064,045</i></div>
<div class="t r" style="left:755.50px;top:451.04px;width:130.00px;height:13.89px;"><i>61</i></div>
<div class="t c" style="left:496.00px;top:464.92px;width:130.00px;height:13.89px;"><i>2023-01-02</i></div>
<div class="t r" style="left:626.00px;top:464.92px;width:129.50px;height:13.89px;"><i>44,675,180</i></div>
<div class="t r" style="left:755.50px;top:464.92px;width:130.00px;height:13.89px;"><i>33</i></div>
<div class="t c" style="left:496.00px;top:478.81px;width:130.00px;height:13.89px;"><i>2022-02-28</i></div>
<div class="t r" style="left:626.00px;top:478.81px;width:129.50px;height:13.89px;"><i>5,512,320</i></div>
<div class="t r" style="left:755.50px;top:478.81px;width:130.00px;height:13.89px;"><i>28</i></div>
<div class="t c" style="left:496.00px;top:492.69px;width:130.00px;height:13.89px;"><i>2022-02-28</i></div>
<div class="t r" style="left:626.00px;top:492.69px;width:129.50px;height:13.89px;"><i>5,967,500</i></div>
<div class="t r" style="left:755.50px;top:492.69px;width:130.00px;height:13.89px;"><i>28</i></div>
<div class="t c" style="left:496.00px;top:506.58px;width:130.00px;height:13.89px;"><i>2022-02-28</i></div>
<div class="t r" style="left:626.00px;top:506.58px;width:129.50px;height:13.89px;"><i>14,080,220</i></div>
<div class="t r" style="left:755.50px;top:506.58px;width:130.00px;height:13.89px;"><i>28</i></div>
<div class="t c" style="left:496.00px;top:520.47px;width:130.00px;height:13.89px;"><i>2022-03-31</i></div>
<div class="t r" style="left:626.00px;top:520.47px;width:129.50px;height:13.89px;"><i>740,520</i></div>
<div class="t r" style="left:755.50px;top:520.47px;width:130.00px;height:13.89px;"><i>31</i></div>
<div class="t c" style="left:496.00px;top:534.35px;width:130.00px;height:13.89px;"><i>2022-04-29</i></div>
<div class="t r" style="left:626.00px;top:534.35px;width:129.50px;height:13.89px;"><i>2,612,500</i></div>
<div class="t r" style="left:755.50px;top:534.35px;width:130.00px;height:13.89px;"><i>29</i></div>
<div class="t c" style="left:496.00px;top:548.24px;width:130.00px;height:13.89px;"><i>2022-04-29</i></div>
<div class="t r" style="left:626.00px;top:548.24px;width:129.50px;height:13.89px;"><i>6,654,450</i></div>
<div class="t r" style="left:755.50px;top:548.24px;width:130.00px;height:13.89px;"><i>29</i></div>
<div class="a" style="left:4px;top:565px;width:1277px;height:1px;background:#e4e4e4"></div>
<!-- scrollbar -->
<div class="a" style="left:1271px;top:77px;width:10px;height:488px;background:#efefef"></div>
<div class="a" style="left:1277px;top:88.5px;width:1.5px;height:20.5px;background:#6e6e6e"></div>
</body></html>
